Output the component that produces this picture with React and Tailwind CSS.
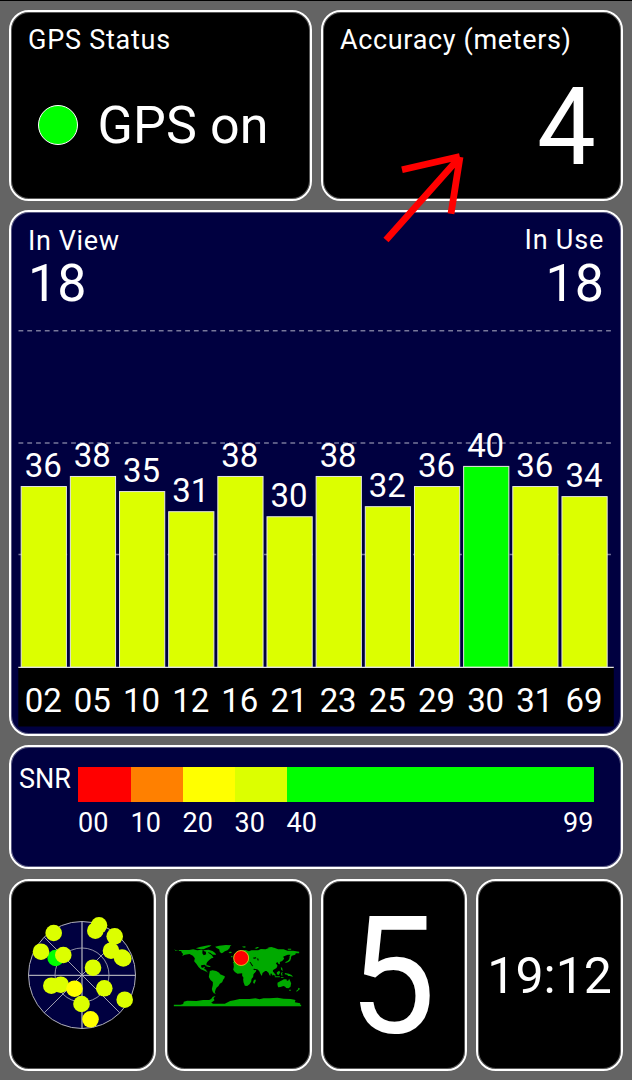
const BARS = [
  ['02', 36], ['05', 38], ['10', 35], ['12', 31], ['16', 38], ['21', 30],
  ['23', 38], ['25', 32], ['29', 36], ['30', 40], ['31', 36], ['69', 34],
];

const SATELLITES = [
  [55.7, 958, '#00ff00'], [53.7, 933], [41, 951.7], [63.3, 955], [95.3, 930.7], [99, 925.3],
  [114.7, 936.3], [111, 950.7], [122, 957.5], [123.3, 958.5], [93, 967.7], [104.3, 988.3],
  [124.7, 999.7], [51.3, 985.7], [60.7, 984.7], [74.5, 988.7, '#ffff00'], [81.5, 1004],
  [90.5, 1019.3, '#ffff00'],
];

const PANEL = 'border-2 border-white rounded-[20px] bg-black shadow-[inset_0_0_0_1px_rgba(255,255,255,0.35)]';
const NAVY = 'border-2 border-white rounded-[20px] bg-[#000040] shadow-[inset_0_0_0_1px_rgba(255,255,255,0.35)]';

function Chart() {
  return (
    <svg className="block" width="614" height="410" viewBox="9 320 614 410" fontFamily="Roboto, sans-serif">
      {[330.8, 443, 554.5].map((y) => (
        <line key={y} x1="18.5" x2="611" y1={y} y2={y} stroke="#77779a" strokeWidth="1.4" strokeDasharray="4.8 3.97" />
      ))}
      <rect x="18.3" y="667" width="595.5" height="59.5" fill="#000" />
      {BARS.map(([id, v], i) => {
        const x = 21.2 + i * 49.16;
        const y = 667.8 - v * 5.035;
        return (
          <g key={id}>
            <rect x={x} y={y} width="45.2" height={667.3 - y} fill={v >= 40 ? '#00ff00' : '#dcff00'} stroke="#e8e8e0" strokeWidth="1" />
            <text x={x + 22} y={y - 9.9} fontSize="33" fill="#fff" textAnchor="middle" textLength="37">{v}</text>
            <text x={x + 22} y="712" fontSize="33" fill="#fff" textAnchor="middle" textLength="37">{id}</text>
          </g>
        );
      })}
      <line x1="18.3" x2="613.8" y1="667.3" y2="667.3" stroke="#e0e0e0" strokeWidth="1.2" />
    </svg>
  );
}

function Radar() {
  return (
    <svg width="142" height="187" viewBox="11 882 142 187">
      <circle cx="82" cy="975" r="53.5" fill="#000040" stroke="#b0b0b8" strokeWidth="1" />
      <circle cx="82" cy="975" r="27" fill="none" stroke="#a0a0b0" strokeWidth="0.9" />
      <path d="M82 921.5V1028.5M28.5 975.3H135.5" stroke="#a8a8b4" strokeWidth="1.3" />
      <path d="M44.2 937.2L119.8 1012.8M119.8 937.2L44.2 1012.8" stroke="#b0b0bc" strokeWidth="0.9" />
      {SATELLITES.map(([x, y, c], i) => (
        <circle key={i} cx={x} cy={y} r="8.3" fill={c || '#dcff00'} />
      ))}
    </svg>
  );
}

function WorldMap() {
  return (
    <svg width="142" height="90" viewBox="21.5 0 426 270">
      <g fill="#00aa00">
        <path d="M42 59h4v4h12v-3h30l12-2 12 3 14-2 4 4-4 3 8 3 4-4 4-2 4 6 5 3 5 4 5 7-6 2-6 4-6 6-3 5v7l-6-3-10 2 0 6 6 2 2-4 3 1-2 6 6 2 2 6 5 1-4 1-8-5-11-4-7-7-6-9-7-8 2-9-6-8-10-5-14 2-8 4 3-6-4-4-2-5-12-1z" />
        <path d="M108 55l12-4 14-3 12-2 9 0-6 4-10 4-8 4-10 0z" />
        <path d="M130 61l16-2 12 4 8 6 3 5-10 0-8-6-10-2-8-2z" />
        <path d="M166 50l12-3 20-2 17 1-4 3-2 6-6 6-8 3-6 4-4 2-5-4-2-8-8-4z" />
        <path d="M206 66l8-1 2 3-6 2z" />
        <path d="M135 107l8-1 9 3-1 2-7-1z" />
        <path d="M150 123l8-2 11 2 9 5 3 5 14 6-1 5-4 5-3 8-7 4-4 7-6 5-3 6-2 8 3 4-6-1-4-6-2-7 3-12 0-9-7-6-5-9 1-7z" />
        <path d="M221 98l12-2 12 0 8 4 12 0 5 2 6 12 7 7 7-2-3 7-6 6-1 9-5 6-1 8-5 8-7 5-7-1-4-10-1-9 1-5-4-6v-7l-14 1-8-5-5-7 2-9z" />
        <path d="M286 148l2 4-4 9-4-2 1-7z" />
        <path d="M222 94v-8l7-1-3-4 8-4 6-6-2-4 8-5 11-2 10 4 8-3 20 0 8-4 14 1 12-5 14 0 12 5 16 0 12 4 17 0 18 3v5l-10 0-2 4-10 3-4 7-3-5 3-5-8 0-8 3-6 3 3 6-6 7-7 3 0 7-4-1-2-5-6 2 5 8-3 7-10 6-2 5 5 7-4 5-5-7-2 1 0 6-3-1-3-8-6-5-4 0-8 6-2 9-4-6-4-9-6-5-10-2-3 5 9 1-3 5-8 7-7 2-4-9-6-10-1-6-9-1-6-3-1-3-9 1-7-6-8 0z" />
        <path d="M221 79l4-8 4 0 5 10-8 3zM214 78h4v4h-4z" />
        <path d="M246 50l8-1 5 2-6 2zM284 55l8-4 6 0-7 5zM323 53l12-2 7 3-12 1zM384 56h10v3h-10z" />
        <path d="M390 79l3-1 1 6-3 8-5 4-8 3-2-2 8-5 4-4z" />
        <path d="M334 121l4 2 10 12-2 3-8-6zM345 139h15v3h-15zM351 127l7-5 3 5-4 8-6-2zM363 128l7-1-4 4 3 5-4 1zM363 111l4 3 2 9-5-4zM375 129l12 2 8 4 5 5-10-2-5 0-3-4-7-1zM363 142h8v2h-8z" />
        <path d="M353 158l8-4 6-3 5-3 8 0 1 4 4 0 3-6 3 7 3 7-2 10-6 5-7-1-3-4-5-2-9 3-7 1-2-7z" />
        <path d="M388 179h5v3h-5zM415 173l6 3-4 4-6 5-2-2 6-5z" />
        <path d="M42 224h382v5H42z" />
        <path d="M60 226l10-4 2-7 10-3 28 1 20-3 18 0 6-3 5-7 8-2-6 7 3 6-10 7 6 3h35l16-8 12-2 16-4 30 0 18-2 12 3 12-3 18 0 24-2 18 3 22 1 14 3-2 7 16 3v5z" />
      </g>
      <path d="M128 65l10 1 1 7-7 3-4-5zM279 83l9-1 2 3-8 1zM269 96l3 0 8 12-3 1zM292 85l4 1 0 6-3-1z" fill="#000" />
      <circle cx="244" cy="84" r="22.5" fill="#ff0000" stroke="#e8d820" strokeWidth="2.5" />
    </svg>
  );
}

export default function App() {
  return (
    <main className="relative flex h-[1080px] w-[632px] flex-col overflow-hidden border-t border-black bg-[#646464] px-[9px] pt-[9px] font-[Roboto,sans-serif] text-white">
      <section className="grid h-[191px] shrink-0 grid-cols-2 gap-[9px]">
        <div className={`${PANEL} pl-[17px] pt-[12px]`}>
          <h2 className="text-[27px] leading-[32px] tracking-[0.75px]">GPS Status</h2>
          <div className="flex items-center pl-[10px] pt-[39px]">
            <span className="size-[40px] rounded-full border border-white bg-[#00ff00]" />
            <span className="pl-[19.5px] pt-[2px] text-[52px] leading-[58px] tracking-[0.1px]">GPS on</span>
          </div>
        </div>
        <div className={`${PANEL} pl-[17.5px] pr-[25px] pt-[12px]`}>
          <h2 className="text-[27px] leading-[32px] tracking-[0.65px]">Accuracy (meters)</h2>
          <p className="origin-right scale-x-[0.97] pt-[11px] text-right text-[108px] leading-[120px]">4</p>
        </div>
      </section>

      <section className={`${NAVY} mt-[9px] h-[526px] shrink-0`}>
        <div className="flex h-[108px] justify-between px-[17px] pt-[12px]">
          <div>
            <h2 className="pt-px text-[27px] leading-[32px] tracking-[0.6px]">In View</h2>
            <p className="pt-px text-[52px] leading-[52px]">18</p>
          </div>
          <div className="text-right">
            <h2 className="text-[27px] leading-[32px] tracking-[0.8px]">In Use</h2>
            <p className="pt-[2px] text-[52px] leading-[52px]">18</p>
          </div>
        </div>
        <div className="-mx-[2px]"><Chart /></div>
      </section>

      <section className={`${NAVY} mt-[9px] h-[124px] shrink-0 pl-[7px] pt-[20px]`}>
        <div className="flex">
          <span className="w-[60px] pl-px text-[27px] leading-[24px]">SNR</span>
          <div className="flex h-[35px]">
            <div className="w-[52.5px] bg-[#ff0000]" />
            <div className="w-[52px] bg-[#ff8000]" />
            <div className="w-[52px] bg-[#ffff00]" />
            <div className="w-[52px] bg-[#dcff00]" />
            <div className="w-[307px] bg-[#00ff00]" />
          </div>
        </div>
        <div className="flex pl-[60px] pt-[5px] text-[27px] leading-[32px]">
          <span className="w-[52.5px]">00</span>
          <span className="w-[52px]">10</span>
          <span className="w-[52px]">20</span>
          <span className="w-[52px]">30</span>
          <span className="w-[276.5px]">40</span>
          <span>99</span>
        </div>
      </section>

      <section className="mt-[10px] grid h-[192px] shrink-0 grid-cols-4 gap-[9px]">
        <div className={`${PANEL} flex items-center justify-center`}><Radar /></div>
        <div className={`${PANEL} flex items-center justify-center`}><WorldMap /></div>
        <div className={`${PANEL} flex items-center justify-center pt-[2px] text-[164px] leading-[164px]`}><span className="-ml-[3px] scale-x-[0.95]">5</span></div>
        <div className={`${PANEL} flex items-center justify-center pt-px text-[50px] leading-[60px]`}>19:12</div>
      </section>

      <svg className="pointer-events-none absolute left-[380px] top-[149px]" width="90" height="100" viewBox="380 150 90 100">
        <path d="M386 240L459 158M402 169.8L459.8 156.5M451 213.8L460 157" stroke="#ff0000" strokeWidth="6.8" fill="none" />
      </svg>
    </main>
  );
}
